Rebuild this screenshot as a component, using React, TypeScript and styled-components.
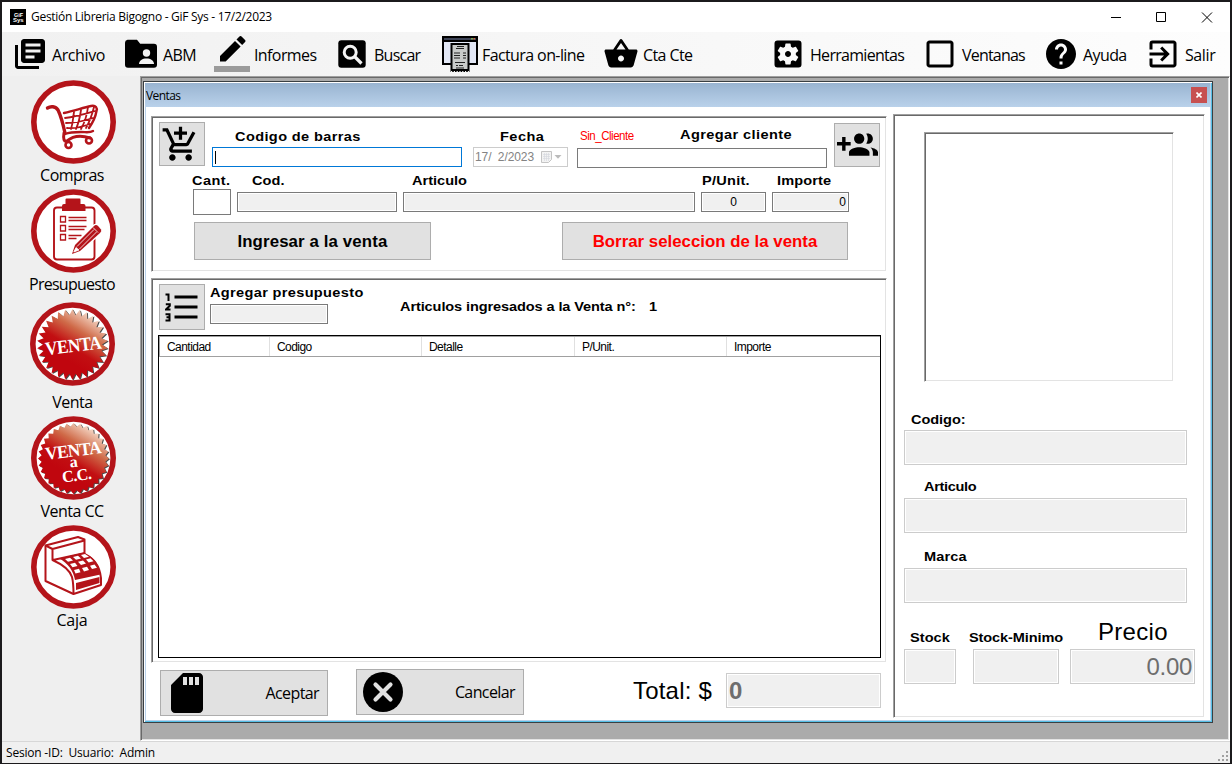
import React from "react";
import styled, { createGlobalStyle, css } from "styled-components";
import {
  MdLibraryBooks,
  MdSettingsApplications,
  MdCheckBoxOutlineBlank,
  MdHelp,
  MdExitToApp,
  MdSdCard,
} from "react-icons/md";

const Global = createGlobalStyle`
  * { box-sizing: border-box; }
  body { margin: 0; background: #1b1a1c; overflow: hidden; }
  svg { display: block; flex: none; }
`;

const sans = `"Liberation Sans", Arial, sans-serif`;
const ui = `"Open Sans", "Noto Sans", sans-serif`;

const Frame = styled.div`
  width: 1232px;
  height: 764px;
  padding: 2px 2px 1px;
  background: #1b1a1c;
  display: flex;
  flex-direction: column;
  color: #000;
  font-family: ${ui};
`;

const TitleBar = styled.header`
  height: 30px;
  flex: none;
  background: #fff;
  display: flex;
  align-items: center;
  padding: 0 17px 0 8px;
  font-size: 12px;
`;

const AppIcon = styled.div`
  width: 16px;
  height: 16px;
  background: #000;
  margin-right: 5px;
`;

const TitleText = styled.div`
  flex: 1;
  white-space: nowrap;
  letter-spacing: -0.29px;
  line-height: 16px;
`;

const Controls = styled.div`
  display: flex;
  align-items: center;
  gap: 34px;
`;

const Toolbar = styled.nav`
  height: 44px;
  flex: none;
  display: flex;
  background: linear-gradient(90deg, #f1f1f1, #fdfdfd);
  padding-left: 10px;
`;

const ToolItem = styled.div<{ $w: number; $ls?: number }>`
  width: ${(p) => p.$w}px;
  display: flex;
  align-items: center;
  gap: 4px;
  white-space: nowrap;
  font-size: 16px;
  letter-spacing: ${(p) => p.$ls ?? -0.6}px;
  line-height: 22px;
`;

const ToolText = styled.span`
  padding-top: 1px;
`;

const Main = styled.div`
  flex: 1;
  display: flex;
  min-height: 0;
`;

const Sidebar = styled.aside`
  width: 138px;
  flex: none;
  background: #efefef;
  padding-top: 4px;
`;

const SideItem = styled.div<{ $h?: number; $pl?: number }>`
  height: ${(p) => p.$h ?? 109}px;
  display: flex;
  flex-direction: column;
  align-items: center;
  padding-left: ${(p) => p.$pl ?? 5}px;
  font-size: 16px;
  letter-spacing: -0.6px;
  line-height: 20px;
`;

const SideLabel = styled.div<{ $mt?: number; $pr?: number; $ls?: number }>`
  margin-top: ${(p) => p.$mt ?? 0}px;
  padding-right: ${(p) => p.$pr ?? 3}px;
  letter-spacing: ${(p) => p.$ls ?? -0.5}px;
`;

const sunken = css`
  border: 1px solid;
  border-color: #a0a0a0 #fff #fff #a0a0a0;
  box-shadow: inset 1px 1px 0 #696969, inset -1px -1px 0 #e3e3e3;
`;

const MdiArea = styled.main`
  flex: 1;
  ${sunken}
  background: #ababab;
  padding: 4px 0 0 2px;
`;

const ChildWindow = styled.section`
  width: 1070px;
  height: 642px;
  border: 1px solid #3a3f42;
  background: #fff;
  box-shadow: inset 1px 1px 0 #fff, inset -1px -1px 0 #55bfe6, inset -2px -2px 0 #b9d1ea, inset 2px 0 0 #b9d1ea;
  padding: 1px 2px 2px 1px;
`;

const ChildTitle = styled.div`
  height: 24px;
  display: flex;
  align-items: center;
  justify-content: space-between;
  background: linear-gradient(#99b4d1, #b9d1ea);
  padding: 0 3px 0 1px;
  font-size: 12px;
  letter-spacing: -0.6px;
`;

const ChildText = styled.span`
  padding-top: 1px;
`;

const ChildClose = styled.button`
  width: 16px;
  height: 16px;
  border: 0;
  padding: 0;
  background: #c75050;
  display: grid;
  place-items: center;
`;

const Body = styled.div`
  display: flex;
  padding-left: 6px;
  gap: 6px;
`;

const LeftCol = styled.div`
  width: 736px;
  padding-top: 9px;
`;

const Panel = styled.div<{ $h: number }>`
  height: ${(p) => p.$h}px;
  ${sunken}
  padding: 1px;
`;

const EntryPanel = styled(Panel)`
  margin-bottom: 6px;
`;

const DetailPanel = styled(Panel)`
  width: 312px;
  margin-top: 7px;
`;

const Row = styled.div<{ $pl?: number; $mt?: number; $gap?: number }>`
  display: flex;
  align-items: flex-start;
  padding-left: ${(p) => p.$pl ?? 0}px;
  margin-top: ${(p) => p.$mt ?? 0}px;
  gap: ${(p) => p.$gap ?? 0}px;
`;

const Column = styled.div<{ $w: number; $ml?: number; $mt?: number }>`
  width: ${(p) => p.$w}px;
  flex: none;
  margin-left: ${(p) => p.$ml ?? 0}px;
  margin-top: ${(p) => p.$mt ?? 0}px;
`;

const Label = styled.div<{ $pl?: number; $ls?: number; $mt?: number }>`
  height: 16px;
  margin-top: ${(p) => p.$mt ?? 0}px;
  margin-left: ${(p) => p.$pl ?? 0}px;
  font: bold 13.6px/18px ${sans};
  letter-spacing: ${(p) => p.$ls ?? 0.1}px;
  white-space: nowrap;
  transform: scaleX(1.07);
  transform-origin: 0 0;
`;

const ClientHead = styled.div`
  display: flex;
  height: 17px;
  padding-left: 3px;
`;

const ClientName = styled.span`
  width: 100px;
  padding-top: 2px;
  color: #f00;
  font: 12px/16px ${sans};
  letter-spacing: -0.5px;
  transform: scaleX(0.96);
  transform-origin: 0 0;
`;

const Field = styled.div<{
  $h?: number;
  $mt?: number;
  $kind?: "edit" | "readonly" | "focus" | "disabled";
  $align?: string;
}>`
  height: ${(p) => p.$h ?? 20}px;
  margin-top: ${(p) => p.$mt ?? 0}px;
  display: flex;
  align-items: center;
  justify-content: ${(p) => p.$align ?? "flex-start"};
  border: 1px solid
    ${(p) => (p.$kind === "focus" ? "#0078d7" : p.$kind === "disabled" ? "#cccccc" : "#7a7a7a")};
  background: ${(p) => (p.$kind === "readonly" || p.$kind === "disabled" ? "#f0f0f0" : "#fff")};
  box-shadow: inset 0 0 0 1px #fff;
  padding: 0 2px;
  font: 12px/16px ${sans};
  color: #000;
`;

const DateField = styled(Field)`
  color: #838383;
  letter-spacing: -0.1px;
  white-space: pre;
  padding: 0 4px 0 1px;
  justify-content: space-between;
  background: #fff;
`;

const Caret = styled.i`
  width: 1px;
  height: 13px;
  background: #000;
`;

const BigValue = styled.span<{ $bold?: boolean }>`
  color: #6d6d6d;
  font: ${(p) => (p.$bold ? "bold" : "normal")} 24px/30px ${sans};
  letter-spacing: -0.3px;
`;

const Button = styled.button<{ $w: number; $h: number; $mt?: number; $ml?: number }>`
  width: ${(p) => p.$w}px;
  height: ${(p) => p.$h}px;
  flex: none;
  margin: ${(p) => p.$mt ?? 0}px 0 0 ${(p) => p.$ml ?? 0}px;
  padding: 0;
  border: 1px solid #adadad;
  background: #e1e1e1;
  display: flex;
  align-items: center;
  justify-content: center;
  color: #000;
`;

const ButtonText = styled.span<{ $red?: boolean }>`
  font: bold 16px/20px ${sans};
  padding-top: 2px;
  white-space: nowrap;
  letter-spacing: ${(p) => (p.$red ? 0.02 : 0.12)}px;
  color: ${(p) => (p.$red ? "#f00" : "#000")};
  transform: scaleX(1.05);
`;

const CartButton = styled(Button)`
  padding-right: 3px;
`;

const ActionButton = styled(Button)`
  justify-content: space-between;
  padding: 0 8px 0 2px;
  font: 16px/20px ${ui};
  letter-spacing: -0.6px;
`;

const Table = styled.div`
  width: 723px;
  height: 323px;
  margin: 5px 0 0 5px;
  border: 1px solid #000;
`;

const TableHead = styled.div`
  height: 21px;
  display: flex;
  border: solid #a0a0a0;
  border-width: 1px 0 1px 1px;
`;

const Th = styled.div<{ $w: number }>`
  width: ${(p) => p.$w}px;
  flex: none;
  border-right: 1px solid #e0e0e0;
  padding-left: 7px;
  font: 12px/20px ${sans};
  letter-spacing: -0.55px;

  &:last-child {
    border-right: 0;
  }
`;

const TotalLabel = styled.div`
  font: 24px/28px ${sans};
  width: 93px;
  margin: 8px 0 0 109px;
  white-space: nowrap;
  letter-spacing: 0.2px;
`;

const PictureBox = styled.div`
  width: 250px;
  height: 250px;
  margin: 16px 0 0 29px;
  ${sunken}
`;

const PriceLabel = styled.div`
  height: 28px;
  margin: 0 0 3px 28px;
  font: 24px/28px ${sans};
  letter-spacing: 0.3px;
`;

const StatusBar = styled.footer`
  height: 22px;
  flex: none;
  background: #f0f0f0;
  border-top: 1px solid #d7d7d7;
  display: flex;
  align-items: center;
  padding-left: 4px;
  font-size: 12px;
  white-space: pre;
  letter-spacing: -0.2px;
  justify-content: space-between;
`;

const RED = "#b4141a";

const FolderIcon = () => (
  <svg width="36" height="36" viewBox="0 0 36 36">
    <path d="M4.5 4H14l3.2 4H31a3 3 0 0 1 3 3v18a3 3 0 0 1-3 3H5a3 3 0 0 1-3-3V7a3 3 0 0 1 2.500-3z" transform="translate(0 -.3)" />
    <circle cx="23.500" cy="17" r="3.700" fill="#f3f3f3" />
    <path d="M16 28c0-3.500 3.500-5.500 7.500-5.500s7.500 2 7.500 5.500z" fill="#f3f3f3" />
  </svg>
);

const PencilIcon = () => (
  <svg width="36" height="36" viewBox="0 0 24 24">
    <path d="M17.750 7L14 3.250l-10 10V17h3.750l10-10zm2.960-2.960c.39-.39.39-1.020 0-1.410L18.370.29c-.39-.39-1.020-.39-1.410 0L15 2.250 18.750 6l1.960-1.960z" />
    <path d="M0 20h24v4H0z" fill="#9b9b9b" />
  </svg>
);

const SearchIcon = () => (
  <svg width="36" height="36" viewBox="0 0 36 36" fill="none">
    <rect x="4.300" y="4.300" width="27.400" height="27.400" rx="3" fill="#000" />
    <circle cx="16.200" cy="16.200" r="6" stroke="#f4f4f4" strokeWidth="3" />
    <path d="M20.500 20.500l7 7" stroke="#f4f4f4" strokeWidth="3.200" />
  </svg>
);

const InvoiceIcon = () => (
  <svg width="36" height="36" viewBox="0 0 36 36">
    <path d="M0 0h36v29H0z" />
    <path d="M2 2h32v2H2z" fill="#3d4356" />
    <path d="M29 2h2v1.500h-2z" fill="#77a84e" />
    <path d="M31.500 2h1.500v1.500h-1.500z" fill="#d46b3c" />
    <path d="M2 6h32v21H2z" fill="#e3e8f6" />
    <path d="M8.500 7h19v29h-19z" />
    <path d="M10.500 9h15v24h-15z" fill="#c9cbc9" />
    <path
      d="M15 10.500h7M14 12.500h8M12 17h6M21 17h3M12 19.500h6M21 19.500h3M12 22h6M21 22h3M13 26.500h10M14 29.500h2M17 29.500h4M14 32h8"
      stroke="#222"
      strokeWidth="1.200"
    />
    <path d="M9 35.500h18" stroke="#f2f2f2" strokeDasharray="1.200 1.600" />
  </svg>
);

const BasketIcon = () => (
  <svg width="36" height="36" viewBox="0 0 24 24">
    <path d="M17.210 9l-4.380-6.560c-.19-.28-.51-.42-.83-.42-.32 0-.64.14-.83.430L6.790 9H2c-.55 0-1 .45-1 1 0 .09.010.18.040.27l2.540 9.270c.23.840 1 1.460 1.920 1.460h13c.92 0 1.690-.62 1.930-1.460l2.540-9.270L23 10c0-.55-.45-1-1-1h-4.790zM9 9l3-4.400L15 9H9zm3 8c-1.100 0-2-.9-2-2s.9-2 2-2 2 .9 2 2-.9 2-2 2z" />
  </svg>
);

const AddCartIcon = () => (
  <svg width="39" height="39" viewBox="0 0 24 24">
    <path d="M11 9h2V6h3V4h-3V1h-2v3H8v2h3v3zm-4 9c-1.100 0-1.990.9-1.990 2S5.900 22 7 22s2-.9 2-2-.9-2-2-2zm10 0c-1.100 0-1.990.9-1.990 2s.89 2 1.990 2 2-.9 2-2-.9-2-2-2zm-9.830-3.250l.03-.12.900-1.630h7.450c.75 0 1.410-.41 1.750-1.030l3.860-7.010L19.420 4h-.01l-1.100 2-2.760 5H8.530l-.13-.27L6.160 6l-.95-2-.94-2H1v2h2l3.600 7.590-1.350 2.450c-.16.28-.25.61-.25.960 0 1.100.9 2 2 2h12v-2H7.420c-.13 0-.25-.11-.25-.25z" />
  </svg>
);

const GroupAddIcon = () => (
  <svg width="41" height="41" viewBox="0 0 24 24">
    <path d="M8 10H5V7H3v3H0v2h3v3h2v-3h3v-2zm10 1c1.660 0 2.990-1.340 2.990-3S19.660 5 18 5c-.32 0-.63.050-.91.140.57.810.900 1.790.900 2.860s-.34 2.040-.9 2.860c.28.090.59.140.91.140zm-5 0c1.660 0 2.990-1.340 2.990-3S14.660 5 13 5c-1.660 0-3 1.340-3 3s1.340 3 3 3zm6.620 2.160c.83.730 1.380 1.660 1.380 2.840v2h3v-2c0-1.540-2.370-2.490-4.380-2.840zM13 13c-2 0-6 1-6 3v2h12v-2c0-2-4-3-6-3z" />
  </svg>
);

const NumberListIcon = () => (
  <svg width="34" height="30" viewBox="0 0 34 30" fill="none" stroke="#000">
    <path d="M9.500 5h23M9.500 15h23M9.500 25h23" strokeWidth="3" />
    <path d="M.5 2.500h3V9M.8 12.200h4v1.600L1 17.500h4.500M.5 22.200h4v6.300h-4M1.500 25.300h3" strokeWidth="2" />
  </svg>
);

const CancelIcon = () => (
  <svg width="48" height="48" viewBox="0 0 48 48">
    <circle cx="24" cy="24" r="20" />
    <path d="M16.500 16.500l15 15M31.500 16.500l-15 15" stroke="#e1e1e1" strokeWidth="4.200" strokeLinecap="round" />
  </svg>
);

const Ring = ({ children }: { children: React.ReactNode }) => (
  <svg width="85" height="85" viewBox="0 0 85 85">
    <ellipse cx="42.500" cy="42" rx="39.700" ry="39" fill="#fff" stroke={RED} strokeWidth="5.600" />
    {children}
  </svg>
);

const ComprasIcon = () => (
  <Ring>
    <g fill="none" stroke={RED} strokeLinecap="round" strokeLinejoin="round">
      <path d="M16.500 28c3-2 8-2 10.500 2 3 6 5 14 7 23" strokeWidth="3.400" />
      <path d="M33 33c10-2 18-5 27-7 5-1 6.500 2 5.500 5-1 6-4 12-7.500 17" strokeWidth="2.400" />
      <path d="M34 38c11-1 20-4 30-7M35 43c10 0 18-2 27-5M36 48c8 1 15-1 23-4M43 32c-1 6-1 11-3 17M50 30c-1 7-2 12-5 19M57 27c-1 8-3 15-7 22M63 27c-2 8-4 14-8 21" strokeWidth="1.800" />
      <path d="M34 54c5-2 11-2 16-2 5 0 9 1 12-1" strokeWidth="2.400" />
      <path d="M33 53c-1 6 0 9 3 8 8-7 17-5 23-3" strokeWidth="3" />
      <circle cx="37.500" cy="65" r="3" strokeWidth="2.600" />
      <circle cx="58" cy="60.500" r="3" strokeWidth="2.600" />
    </g>
  </Ring>
);

const PresupuestoIcon = () => (
  <Ring>
    <rect x="23" y="18.500" width="40.500" height="52" rx="3" fill="none" stroke={RED} strokeWidth="1.900" />
    <path d="M34.500 15v-4.500q0-1 1-1h13q1 0 1 1V15h3q2 0 2 2v5h-23.500v-5q0-2 2-2z" fill={RED} />
    <path d="M29.500 27.500h5v5.500h-5zM29.500 36.500h5v5.500h-5zM29.500 45.500h5v5.500h-5z" fill="none" stroke={RED} strokeWidth="1.300" />
    <path d="M37.500 28.500h18M37.500 31.500h18M37.500 37.500h18M37.500 40.500h16M37.500 46.500h13M37.500 49.500h8" stroke={RED} strokeWidth="1.500" />
    <path d="M41 65l3-9 19-19q2-2 4.500.5 l2.500 3q1 1.500-1 3.500L49 62z" fill={RED} stroke="#fff" strokeWidth="2.600" paintOrder="stroke" />
    <path d="M46 57.500l17-17M48.500 60l17-17M62 38.500l5 5M42.800 63l2.200-4.500 3 2.500z" stroke="#fff" strokeWidth=".8" fill="#fff" />
  </Ring>
);

const starburst = (points: number, outer: number, inner: number) => {
  const parts: string[] = [];
  for (let i = 0; i < points * 2; i++) {
    const r = i % 2 ? inner : outer;
    const a = (Math.PI * i) / points;
    parts.push(`${(42.5 + r * Math.sin(a)).toFixed(2)},${(42.5 - r * Math.cos(a)).toFixed(2)}`);
  }
  return parts.join(" ");
};

const Badge = ({ id, points, inner, children }: { id: string; points: number; inner: number; children: React.ReactNode }) => (
  <Ring>
    <defs>
      <linearGradient id={id} x1=".35" y1=".68" x2=".75" y2=".02">
        <stop offset="0" stopColor="#c0060e" />
        <stop offset=".25" stopColor="#c20f12" />
        <stop offset=".58" stopColor="#cf6a48" />
        <stop offset="1" stopColor="#fbeadb" />
      </linearGradient>
    </defs>
    <polygon points={starburst(points, 35.5, inner)} fill="#4a4a4a" transform="translate(1 .7)" />
    <polygon points={starburst(points, 35.5, inner)} fill={`url(#${id})`} />
    <g fill="#fff" fontFamily="Liberation Serif, serif" fontWeight="bold" textAnchor="middle" transform="rotate(-7 42.500 42.500)">
      {children}
    </g>
  </Ring>
);

const CajaIcon = () => (
  <Ring>
    <g fill="none" stroke={RED} strokeWidth="2" strokeLinejoin="round">
      <path d="M14.500 20.500L47 12l6.500 2.500V30c9 3 15 10 16.500 23v7L42.500 69 14.500 56z" fill="#fff" />
      <path d="M14.500 20.500l7 3.500 32-8.500M21.500 24v11c9 4 17 9 19.500 17 1.500 6 1.500 12 1.500 17M22 35l32-7" />
    </g>
    <path d="M28 33.500l25-6c9 4 15 11 16.500 22L44 55c-1.500-9-7-17-16-21.500z" fill={RED} />
    <path d="M45 58l23.500-6v6L45 65z" fill={RED} />
    <g fill="#fff">
      <path d="M34 34l5-1.200 3 2.600-5 1.300zM42 32l5-1.200 3 2.600-5 1.300zM50 30l4-1 4 2.700-5 1.200zM39 39l5-1.200 2.500 3.200-5 1.300zM47 36.800l5-1.200 3 3-5 1.300zM55 34.500l4.500-1.200 3 3-4.800 1.300zM43 45l5-1.200 1.500 3.500-5 1.300zM51 43l5-1.200 2 3.300-5 1.300zM59 40.800l4.500-1.200 2.500 3.200-5 1.300z" />
    </g>
  </Ring>
);

const Calendar = () => (
  <svg width="22" height="14" viewBox="0 0 22 14">
    <path d="M.5 1.500h10v8l-3 3h-7z" fill="#f3f3f3" stroke="#c4c4c4" />
    <path d="M2 4.500h7M2 6.500h7M2 8.500h7M3.500 3v8M5.500 3v8M7.500 3v8" stroke="#d3d6de" strokeWidth=".6" />
    <path d="M13.500 5h7L17 8.800z" fill="#bbb" />
  </svg>
);

export default function App() {
  return (
    <Frame>
      <Global />
      <TitleBar>
        <AppIcon>
          <svg width="16" height="16" viewBox="0 0 16 16" fill="#fff" fontFamily="Liberation Sans, sans-serif" fontWeight="bold">
            <text x="4" y="7.500" fontSize="5.500">GiF</text>
            <text x="3" y="13" fontSize="6">Sys</text>
          </svg>
        </AppIcon>
        <TitleText>Gestión Libreria Bigogno - GiF Sys - 17/2/2023</TitleText>
        <Controls>
          <svg width="11" height="11"><path d="M0 5.500h10" stroke="#000" /></svg>
          <svg width="11" height="11"><path d="M.5.5h9v9h-9z" stroke="#000" fill="none" /></svg>
          <svg width="12" height="11"><path d="M1 .5l10 10M11 .5l-10 10" stroke="#000" /></svg>
        </Controls>
      </TitleBar>
      <Toolbar>
        <ToolItem $w={111} $ls={-0.4}><MdLibraryBooks size={36} /><ToolText>Archivo</ToolText></ToolItem>
        <ToolItem $w={91}><FolderIcon /><ToolText>ABM</ToolText></ToolItem>
        <ToolItem $w={120}><PencilIcon /><ToolText>Informes</ToolText></ToolItem>
        <ToolItem $w={108} $ls={-0.75}><SearchIcon /><ToolText>Buscar</ToolText></ToolItem>
        <ToolItem $w={161}><InvoiceIcon /><ToolText>Factura on-line</ToolText></ToolItem>
        <ToolItem $w={167}><BasketIcon /><ToolText>Cta Cte</ToolText></ToolItem>
        <ToolItem $w={152} $ls={-0.7}><MdSettingsApplications size={36} /><ToolText>Herramientas</ToolText></ToolItem>
        <ToolItem $w={121} $ls={-0.8}><MdCheckBoxOutlineBlank size={36} /><ToolText>Ventanas</ToolText></ToolItem>
        <ToolItem $w={102}><MdHelp size={36} /><ToolText>Ayuda</ToolText></ToolItem>
        <ToolItem $w={80} $ls={-0.4}><MdExitToApp size={36} /><ToolText>Salir</ToolText></ToolItem>
      </Toolbar>
      <Main>
        <Sidebar>
          <SideItem><ComprasIcon /><SideLabel>Compras</SideLabel></SideItem>
          <SideItem $h={113}><PresupuestoIcon /><SideLabel $ls={-0.75}>Presupuesto</SideLabel></SideItem>
          <SideItem $h={114} $pl={3}>
            <Badge id="venta" points={30} inner={29.5}>
              <text x="43" y="50" fontSize="19" textLength="56" lengthAdjust="spacingAndGlyphs">VENTA</text>
            </Badge>
            <SideLabel $mt={5} $pr={0}>Venta</SideLabel>
          </SideItem>
          <SideItem>
            <Badge id="ventacc" points={32} inner={32}>
              <text x="43" y="40.500" fontSize="18" textLength="56" lengthAdjust="spacingAndGlyphs">VENTA</text>
              <text x="42" y="51" fontSize="16">a</text>
              <text x="43.500" y="65" fontSize="16.500" textLength="29" lengthAdjust="spacingAndGlyphs">C.C.</text>
            </Badge>
            <SideLabel>Venta CC</SideLabel>
          </SideItem>
          <SideItem><CajaIcon /><SideLabel $ls={-0.2}>Caja</SideLabel></SideItem>
        </Sidebar>
        <MdiArea>
          <ChildWindow>
            <ChildTitle>
              <ChildText>Ventas</ChildText>
              <ChildClose aria-label="Cerrar">
                <svg width="6" height="6"><path d="M.5.5l5 5M5.500.5l-5 5" stroke="#fff" strokeWidth="1.600" /></svg>
              </ChildClose>
            </ChildTitle>
            <Body>
              <LeftCol>
                <EntryPanel $h={156}>
                  <Row $pl={6}>
                    <CartButton $w={46} $h={44} $mt={4}><AddCartIcon /></CartButton>
                    <Column $w={250} $ml={7} $mt={10}>
                      <Label $pl={23} $ls={0.36}>Codigo de barras</Label>
                      <Field $kind="focus" $mt={3}><Caret /></Field>
                    </Column>
                    <Column $w={95} $ml={11} $mt={10}>
                      <Label $pl={27} $ls={0.45}>Fecha</Label>
                      <DateField $kind="disabled" $mt={3}>17/  2/2023<Calendar /></DateField>
                    </Column>
                    <Column $w={250} $ml={9} $mt={8}>
                      <ClientHead>
                        <ClientName>Sin_Cliente</ClientName>
                        <Label $ls={0.38}>Agregar cliente</Label>
                      </ClientHead>
                      <Field $mt={5} />
                    </Column>
                    <Button $w={46} $h={44} $mt={5} $ml={7}><GroupAddIcon /></Button>
                  </Row>
                  <Row $pl={40} $mt={4} $gap={6}>
                    <Column $w={38}><Label $pl={-1} $ls={0.4}>Cant.</Label><Field $mt={1} $h={26} /></Column>
                    <Column $w={160}><Label $pl={15}>Cod.</Label><Field $mt={4} $kind="readonly" /></Column>
                    <Column $w={292}><Label $pl={9} $ls={0}>Articulo</Label><Field $mt={4} $kind="readonly" /></Column>
                    <Column $w={65}><Label $pl={1} $ls={0.25}>P/Unit.</Label><Field $mt={4} $kind="readonly" $align="center">0</Field></Column>
                    <Column $w={77}><Label $pl={5}>Importe</Label><Field $mt={4} $kind="readonly" $align="flex-end">0</Field></Column>
                  </Row>
                  <Row $pl={41} $mt={7} $gap={131}>
                    <Button $w={237} $h={38}><ButtonText>Ingresar a la venta</ButtonText></Button>
                    <Button $w={286} $h={38}><ButtonText $red>Borrar seleccion de la venta</ButtonText></Button>
                  </Row>
                </EntryPanel>
                <Panel $h={385}>
                  <Row $pl={6} $mt={4}>
                    <Button $w={46} $h={46}><NumberListIcon /></Button>
                    <Column $w={118} $ml={5}>
                      <Label $ls={0.32}>Agregar presupuesto</Label>
                      <Field $mt={4} $kind="readonly" />
                    </Column>
                    <Column $w={249} $ml={72} $mt={14}><Label $ls={-0.1}>Articulos ingresados a la Venta n°:</Label></Column>
                    <Column $w={20} $mt={14}><Label>1</Label></Column>
                  </Row>
                  <Table>
                    <TableHead>
                      <Th $w={110}>Cantidad</Th>
                      <Th $w={152}>Codigo</Th>
                      <Th $w={153}>Detalle</Th>
                      <Th $w={152}>P/Unit.</Th>
                      <Th $w={153}>Importe</Th>
                    </TableHead>
                  </Table>
                </Panel>
                <Row $pl={9} $mt={6}>
                  <ActionButton $w={168} $h={46} $mt={1}><MdSdCard size={48} />Aceptar</ActionButton>
                  <ActionButton $w={168} $h={46} $ml={28}><CancelIcon />Cancelar</ActionButton>
                  <TotalLabel>Total: $</TotalLabel>
                  <Column $w={155} $mt={4}><Field $h={35} $kind="disabled"><BigValue $bold>0</BigValue></Field></Column>
                </Row>
              </LeftCol>
              <DetailPanel $h={604}>
                <PictureBox />
                <Column $w={283} $ml={9} $mt={29}>
                  <Label $pl={7} $ls={-0.05}>Codigo:</Label>
                  <Field $mt={3} $h={35} $kind="disabled" />
                  <Label $pl={20} $mt={13} $ls={-0.3}>Articulo</Label>
                  <Field $mt={4} $h={35} $kind="disabled" />
                  <Label $pl={20} $mt={15} $ls={0.1}>Marca</Label>
                  <Field $mt={4} $h={35} $kind="disabled" />
                </Column>
                <Row $pl={9} $mt={15}>
                  <Column $w={52} $mt={11}>
                    <Label $pl={6} $ls={0.05}>Stock</Label>
                    <Field $mt={4} $h={35} $kind="disabled" />
                  </Column>
                  <Column $w={86} $ml={17} $mt={11}>
                    <Label $pl={-4} $ls={-0.1}>Stock-Minimo</Label>
                    <Field $mt={4} $h={35} $kind="disabled" />
                  </Column>
                  <Column $w={125} $ml={11}>
                    <PriceLabel>Precio</PriceLabel>
                    <Field $h={35} $kind="disabled" $align="flex-end"><BigValue>0.00</BigValue></Field>
                  </Column>
                </Row>
              </DetailPanel>
            </Body>
          </ChildWindow>
        </MdiArea>
      </Main>
      <StatusBar>
        Sesion -ID:  Usuario:  Admin
        <svg width="12" height="20" fill="#a0a0a0">
          <path d="M8 8h2v2H8zM4 12h2v2H4zM8 12h2v2H8zM0 16h2v2H0zM4 16h2v2H4zM8 16h2v2H8z" />
        </svg>
      </StatusBar>
    </Frame>
  );
}
